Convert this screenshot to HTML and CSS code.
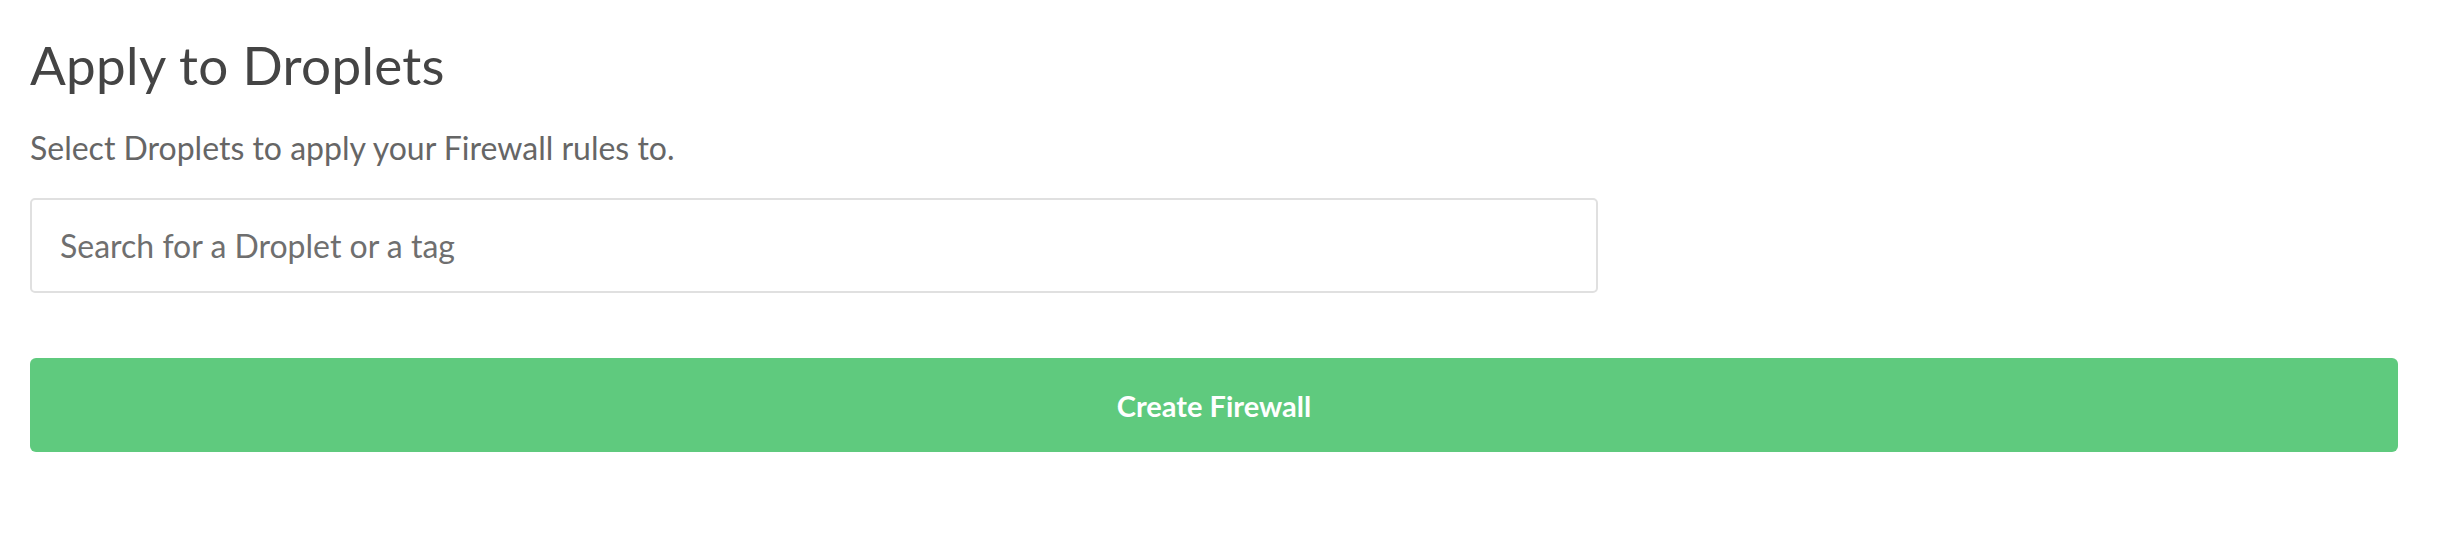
FILE: index.html
```html
<!DOCTYPE html>
<html lang="en">
<head>
<meta charset="utf-8">
<title>Apply to Droplets</title>
<link rel="stylesheet" href="styles.css">
</head>
<body>
<main class="page">
  <section class="apply">
    <h2 class="apply-title">Apply to Droplets</h2>
    <p class="apply-desc">Select Droplets to apply your Firewall rules to.</p>
    <div class="search">
      <input class="search-input" type="text" placeholder="Search for a Droplet or a tag">
    </div>
  </section>
  <button class="create-btn" type="button">Create Firewall</button>
</main>
</body>
</html>
```

FILE: styles.css
```css
* { box-sizing: border-box; }

html, body {
  margin: 0;
  padding: 0;
  background: #ffffff;
}

body {
  font-family: Lato, "Open Sans", Arial, sans-serif;
}

.page {
  padding: 35px 64px 0 30px;
  display: flex;
  flex-direction: column;
}

.apply {
  display: flex;
  flex-direction: column;
}

.apply-title {
  margin: 0;
  font-size: 53px;
  line-height: 60px;
  font-weight: 400;
  letter-spacing: 0.3px;
  color: #444444;
}

.apply-desc {
  margin: 35px 0 0 0;
  font-size: 32px;
  line-height: 36px;
  font-weight: 400;
  color: #666666;
}

.search {
  margin-top: 32px;
  width: 1568px;
}

.search-input {
  display: block;
  width: 100%;
  height: 95px;
  padding: 0 28px;
  border: 2px solid #e0e0e0;
  border-radius: 5px;
  background: #ffffff;
  font-family: Lato, "Open Sans", Arial, sans-serif;
  font-size: 32px;
  color: #444444;
  outline: none;
}

.search-input::placeholder {
  color: #6f6f6f;
  opacity: 1;
}

.create-btn {
  margin-top: 65px;
  width: 100%;
  height: 94px;
  border: none;
  border-radius: 6px;
  background: #5fca7e;
  color: #ffffff;
  font-family: Lato, "Open Sans", Arial, sans-serif;
  font-size: 29px;
  font-weight: 700;
  cursor: pointer;
}
```
